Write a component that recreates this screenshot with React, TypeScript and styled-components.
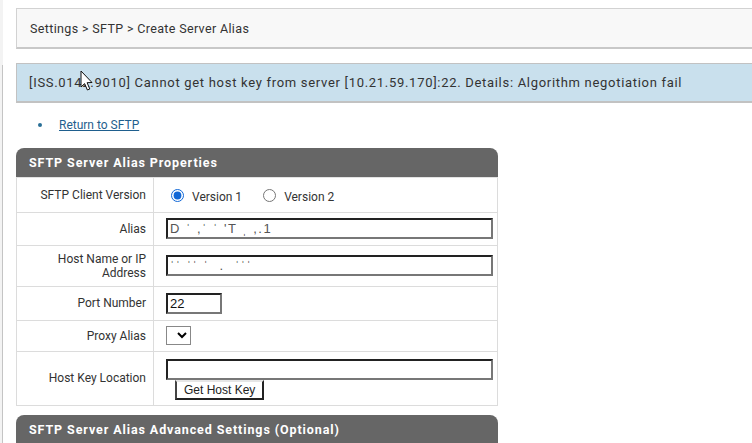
import styled, { createGlobalStyle } from "styled-components";

const GlobalStyle = createGlobalStyle`
  html, body {
    margin: 0;
    padding: 0;
    background: #fff;
    overflow: hidden;
  }
  body {
    font-family: Roboto, "Liberation Sans", Arial, sans-serif;
    color: #333;
  }
`;

const Page = styled.div`
  display: flex;
  width: 780px;
  min-height: 443px;
`;

const Sidebar = styled.div`
  width: 3px;
  display: flex;
  flex-direction: column;
  background: #f3f3f3;
`;

const SidebarTop = styled.div`
  height: 65px;
`;

const SidebarRest = styled.div`
  flex: 1;
  border-right: 1px solid #c4c4c4;
`;

const Main = styled.div`
  flex: 1;
  padding: 8px 0 0 13px;
`;

const Breadcrumb = styled.div`
  height: 38px;
  display: flex;
  align-items: center;
  padding-left: 13px;
  background: #f8f8f8;
  border: 1px solid #d2d2d2;
  border-bottom: 2px solid #c8c8c8;
  border-right: none;
  font-size: 12.5px;
  letter-spacing: 0.35px;
  color: #333;
`;

const ErrorBox = styled.div`
  position: relative;
  margin-top: 14px;
  height: 37px;
  display: flex;
  align-items: center;
  padding-left: 12px;
  background: #c9e0ed;
  border-top: 1px solid #c2c2c2;
  border-left: 1px solid #c2c2c2;
  border-bottom: 2px solid #c2c2c2;
  font-size: 13px;
  letter-spacing: 0.7px;
  color: #333;
  white-space: nowrap;
`;

const Cursor = styled.svg`
  position: absolute;
  left: 63px;
  top: 6px;
`;

const Links = styled.ul`
  margin: 15px 0 0;
  padding-left: 22px;
  list-style: none;
  font-size: 12px;

  li {
    display: flex;
    align-items: center;
  }

  li::before {
    content: "";
    width: 4px;
    height: 4px;
    border-radius: 50%;
    background: #2a6f97;
    margin-right: 17px;
  }
`;

const Link = styled.a`
  color: #1f5f8e;
  text-decoration: underline;
  cursor: pointer;
`;

const Panel = styled.section<{ $gap?: number }>`
  width: 482px;
  margin-top: ${(p) => p.$gap ?? 0}px;
`;

const PanelHeader = styled.div`
  height: 29px;
  display: flex;
  align-items: center;
  padding-left: 13px;
  background: #666;
  color: #fff;
  border-radius: 8px 8px 0 0;
  font-weight: 700;
  font-size: 12.5px;
  letter-spacing: 0.9px;
  border-bottom: 1px solid #e2e2e2;
`;

const Table = styled.table`
  width: 100%;
  table-layout: fixed;
  border-collapse: collapse;
  border: 1px solid #dcdcdc;
  border-top: none;
  font-size: 12px;
`;

const Row = styled.tr<{ $h: number }>`
  height: ${(p) => p.$h}px;
  border-bottom: 1px solid #dcdcdc;
`;

const Label = styled.td`
  width: 129px;
  padding: 0 7px 0 0;
  text-align: right;
  vertical-align: middle;
  line-height: 14px;
  color: #333;
  border-right: 1px solid #dcdcdc;
`;

const Value = styled.td`
  padding: 0 6px 0 12px;
  vertical-align: middle;
`;

const RadioGroup = styled.div`
  display: flex;
  align-items: center;
  padding-top: 1px;
`;

const RadioLabel = styled.label`
  display: inline-flex;
  align-items: center;
  margin-right: 16px;
  font-size: 12px;
  color: #333;

  input {
    width: 13px;
    height: 13px;
    margin: 0 8px 0 5px;
    accent-color: #1268d6;
  }

  span {
    padding-top: 4px;
  }
`;

const TextInput = styled.input<{ $w: number }>`
  box-sizing: border-box;
  width: ${(p) => p.$w}px;
  height: 21px;
  padding: 0 2px;
  font-family: "Liberation Sans", Arial, sans-serif;
  font-size: 13px;
  color: #111;
  background: #fff;
  border: 2px solid;
  border-color: #222 #777 #777 #222;
  outline: none;
  display: block;
`;

const Masked = styled(TextInput)`
  color: #555;
  letter-spacing: 1.5px;
`;

const Select = styled.select`
  width: 25px;
  height: 19px;
  padding: 0;
  border: 1px solid #888;
  background: #fff;
  font-size: 12px;
  display: block;
`;

const KeyField = styled.div`
  display: flex;
  flex-direction: column;
  align-items: flex-start;
  padding-top: 2px;
`;

const Button = styled.button`
  margin-left: 9px;
  height: 20px;
  padding: 0 7px;
  font-family: "Liberation Sans", Arial, sans-serif;
  font-size: 12px;
  color: #222;
  background: #fff;
  border: 2px solid;
  border-color: #e6e6e6 #222 #222 #444;
  cursor: pointer;
`;

const App = () => {
  return (
    <>
      <GlobalStyle />
      <Page>
        <Sidebar>
          <SidebarTop />
          <SidebarRest />
        </Sidebar>
        <Main>
          <Breadcrumb>Settings &gt; SFTP &gt; Create Server Alias</Breadcrumb>
          <ErrorBox>
            [ISS.0142.9010] Cannot get host key from server [10.21.59.170]:22.
            Details: Algorithm negotiation fail
            <Cursor width="14" height="22" viewBox="0 0 14 22">
              <path
                d="M1 1 L1 17 L4.6 13.6 L7.4 20 L9.8 19 L7.1 12.7 L12 12.5 Z"
                fill="#fff"
                stroke="#111"
                strokeWidth="1"
                strokeLinejoin="round"
              />
            </Cursor>
          </ErrorBox>
          <Links>
            <li>
              <Link>Return to SFTP</Link>
            </li>
          </Links>

          <Panel $gap={16}>
            <PanelHeader>SFTP Server Alias Properties</PanelHeader>
            <Table>
              <tbody>
                <Row $h={34}>
                  <Label>SFTP Client Version</Label>
                  <Value>
                    <RadioGroup>
                      <RadioLabel>
                        <input type="radio" name="ver" defaultChecked />
                        <span>Version 1</span>
                      </RadioLabel>
                      <RadioLabel>
                        <input type="radio" name="ver" />
                        <span>Version 2</span>
                      </RadioLabel>
                    </RadioGroup>
                  </Value>
                </Row>
                <Row $h={33}>
                  <Label>Alias</Label>
                  <Value>
                    <Masked $w={327} defaultValue="D ˈ ,ˈ ˈ 'T ˌ ,.1" />
                  </Value>
                </Row>
                <Row $h={41}>
                  <Label>
                    Host Name or IP
                    <br />
                    Address
                  </Label>
                  <Value>
                    <Masked $w={327} defaultValue="ˈˈ ˈˈ ˈ  .  ˈˈˈ" />
                  </Value>
                </Row>
                <Row $h={34}>
                  <Label>Port Number</Label>
                  <Value>
                    <TextInput $w={56} defaultValue="22" />
                  </Value>
                </Row>
                <Row $h={31}>
                  <Label>Proxy Alias</Label>
                  <Value>
                    <Select />
                  </Value>
                </Row>
                <Row $h={54}>
                  <Label>Host Key Location</Label>
                  <Value>
                    <KeyField>
                      <TextInput $w={327} />
                      <Button>Get Host Key</Button>
                    </KeyField>
                  </Value>
                </Row>
              </tbody>
            </Table>
          </Panel>

          <Panel $gap={9}>
            <PanelHeader>SFTP Server Alias Advanced Settings (Optional)</PanelHeader>
          </Panel>
        </Main>
      </Page>
    </>
  );
};

export default App;
